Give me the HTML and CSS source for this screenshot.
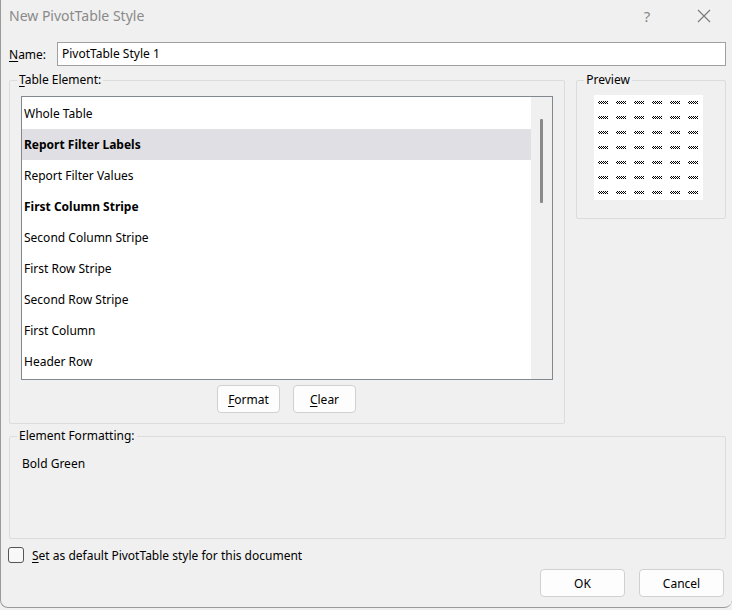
FILE: index.html
```html
<!DOCTYPE html>
<html lang="en">
<head>
	<meta charset="UTF-8">
	<title>New PivotTable Style</title>
	<link rel="stylesheet" href="styles.css">
</head>
<body>
	<div class="dialog">
		<div class="titlebar">
			<span class="title">New PivotTable Style</span>
			<span class="help">?</span>
			<span class="close">
				<svg width="14" height="14" viewBox="0 0 14 14"><path d="M1 1L13 13M13 1L1 13" stroke="#777" stroke-width="1.1" fill="none"/></svg>
			</span>
		</div>

		<div class="name-row">
			<label class="name-label"><u>N</u>ame:</label>
			<div class="name-input">PivotTable Style 1</div>
		</div>

		<div class="top-row">
			<fieldset class="group group-elements">
				<legend><u>T</u>able Element:</legend>
				<div class="listbox">
					<ul class="items">
						<li>Whole Table</li>
						<li class="bold selected">Report Filter Labels</li>
						<li>Report Filter Values</li>
						<li class="bold">First Column Stripe</li>
						<li>Second Column Stripe</li>
						<li>First Row Stripe</li>
						<li>Second Row Stripe</li>
						<li>First Column</li>
						<li>Header Row</li>
					</ul>
					<div class="scrollbar"><span class="thumb"></span></div>
				</div>
				<div class="list-buttons">
					<button class="btn btn-small"><u>F</u>ormat</button>
					<button class="btn btn-small"><u>C</u>lear</button>
				</div>
			</fieldset>

			<fieldset class="group group-preview">
				<legend>Preview</legend>
				<div class="preview" id="preview"></div>
			</fieldset>
		</div>

		<fieldset class="group group-format">
			<legend>Element Formatting:</legend>
			<div class="format-text">Bold Green</div>
		</fieldset>

		<div class="check-row">
			<span class="checkbox"></span>
			<span class="check-label"><u>S</u>et as default PivotTable style for this document</span>
		</div>

		<div class="footer">
			<button class="btn btn-main">OK</button>
			<button class="btn btn-main">Cancel</button>
		</div>
	</div>

	<script type="text/javascript">
		// preview grid: 7 rows x 6 cols of tiny placeholders
		var preview=document.getElementById('preview');
		for (var i = 0; i < 42; i++) {
			var s=document.createElement('span');
			s.className='cell';
			preview.appendChild(s);
		}
	</script>
</body>
</html>
```

FILE: styles.css
```css
*{margin: 0;padding: 0;box-sizing: border-box;}
body{background: #f0f0f0;font-family: "Noto Sans", "Open Sans", sans-serif;font-size: 12px;color: #000;width: 732px;height: 610px;overflow: hidden;}
u{text-decoration: underline;text-underline-offset: 2px;}
li{list-style: none;}

.dialog{width: 732px;height: 608px;background: #f0f0f0;border-left: 1px solid #9a9a9a;border-bottom: 1px solid #9a9a9a;border-radius: 0 0 8px 8px;display: flex;flex-direction: column;}

.titlebar{height: 31px;display: flex;align-items: center;padding-left: 8px;}
.title{flex: 1;font-size: 14px;color: #8a8a8a;}
.help{width: 58px;text-align: center;font-size: 15px;color: #888;}
.close{width: 56px;display: flex;justify-content: center;}

.name-row{display: flex;align-items: center;height: 24px;margin-top: 11px;padding: 0 6px 0 8px;}
.name-label{width: 48px;}
.name-input{flex: 1;height: 24px;background: #fff;border: 1px solid #a0a0a0;padding-left: 4px;line-height: 21px;}

.top-row{display: flex;margin-top: 7px;padding: 0 6px 0 8px;gap: 11px;}
.group{border: 1px solid #dcdcdc;border-radius: 2px;padding: 0;}
.group legend{margin-left: 7px;padding: 0 2px;line-height: 14px;}

.group-elements{width: 557px;height: 351px;}
.listbox{width: 532px;height: 284px;border: 1px solid #838790;background: #fff;display: flex;margin: 9px 0 0 11px;}
.items{flex: 1;padding-top: 1px;}
.items li{height: 31px;line-height: 31px;padding-left: 2px;}
.items li.bold{font-weight: bold;}
.items li.selected{background: #e0dfe3;}
.scrollbar{width: 21px;background: #f0f0f0;display: flex;justify-content: center;padding-top: 22px;}
.thumb{width: 3px;height: 84px;background: #8a8a8a;border-radius: 1px;}

.list-buttons{display: flex;gap: 13px;margin: 5px 0 0 207px;}
.btn{font-family: inherit;font-size: 12px;color: #000;background: #fdfdfd;border: 1px solid #d0d0d0;border-radius: 4px;height: 28px;}
.btn-small{width: 63px;}

.group-preview{width: 150px;height: 146px;}
.preview{width: 109px;height: 105px;background: #fff;display: grid;grid-template-columns: repeat(6, 18px);grid-auto-rows: 15px;padding: 6px 0 0 4px;margin: 8px 0 0 17px;}
.cell{display: block;width: 10px;height: 3px;background: repeating-conic-gradient(#000 0 25%, #fff 0 50%) 0 0/2px 2px;}

.group-format{margin: 5px 6px 0 8px;height: 110px;}
.format-text{padding: 12px 0 0 12px;}

.check-row{display: flex;align-items: center;gap: 8px;margin: 7px 0 0 7px;height: 18px;}
.checkbox{width: 16px;height: 16px;border: 1px solid #555;border-radius: 3px;background: #f8f8f8;}

.footer{display: flex;justify-content: flex-end;gap: 14px;padding-right: 8px;margin-top: 5px;}
.btn-main{width: 85px;height: 28px;}
```
